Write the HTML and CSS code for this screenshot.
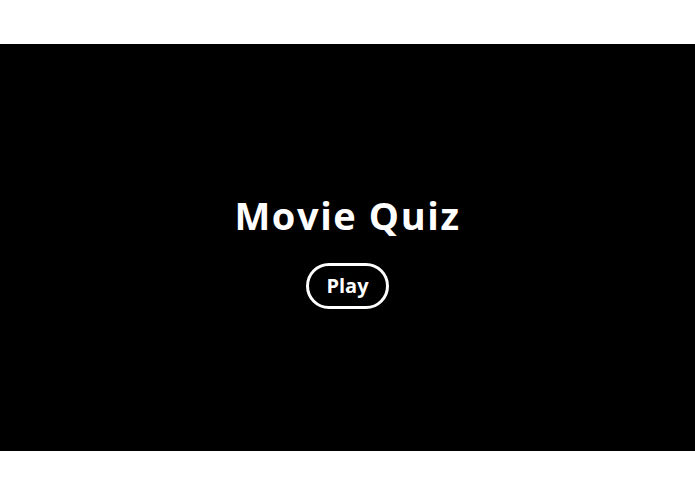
FILE: index.html
```html
<!DOCTYPE html>
<html lang="en">
<head>
<meta charset="utf-8">
<title>Movie Quiz</title>
<link rel="stylesheet" href="styles.css">
</head>
<body>
  <main class="stage">
    <h1 class="title">Movie Quiz</h1>
    <button class="play" type="button">Play</button>
  </main>
</body>
</html>
```
FILE: styles.css
```css
html, body {
  margin: 0;
  padding: 0;
  background: #ffffff;
}

.stage {
  box-sizing: border-box;
  margin-top: 44px;
  height: 407px;
  padding-top: 6px;
  background: #000000;
  display: flex;
  flex-direction: column;
  align-items: center;
  justify-content: center;
  font-family: "Open Sans", "Noto Sans", sans-serif;
  color: #ffffff;
}

.title {
  margin: 0;
  font-size: 38px;
  font-weight: 700;
  line-height: 44px;
  letter-spacing: 1.6px;
}

.play {
  margin-top: 26px;
  width: 83px;
  height: 46px;
  border: 3px solid #ffffff;
  border-radius: 23px;
  background: transparent;
  color: #ffffff;
  font-family: inherit;
  font-size: 20px;
  font-weight: 700;
  padding: 0;
  cursor: pointer;
}
```
